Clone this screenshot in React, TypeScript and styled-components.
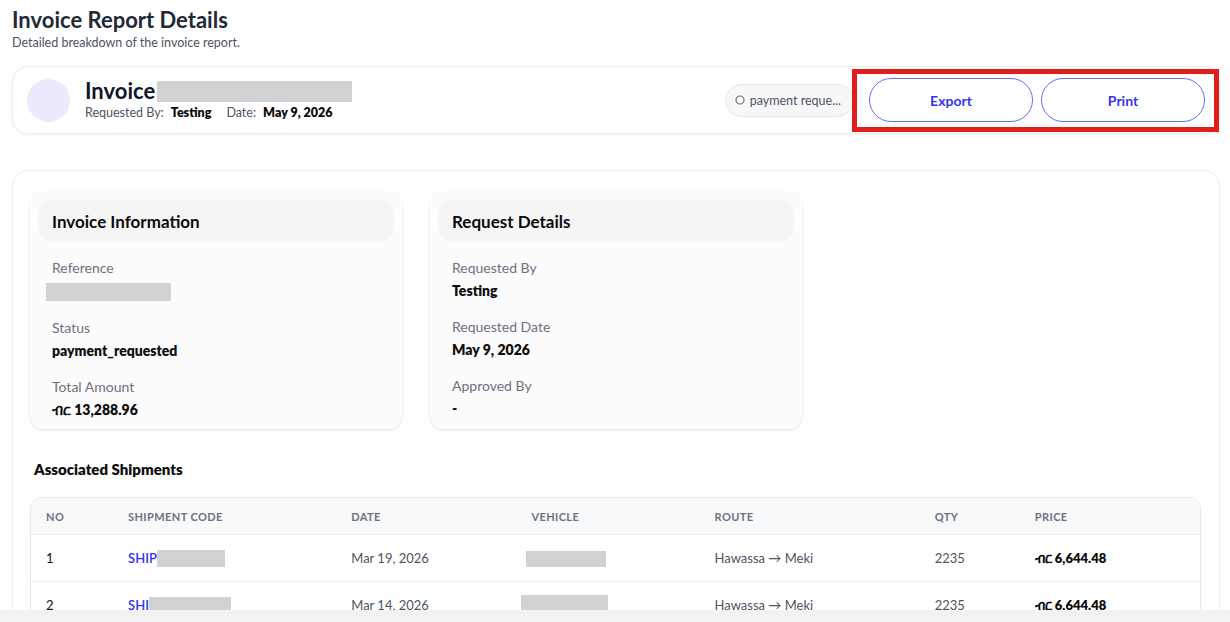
import styled, { createGlobalStyle } from "styled-components";

const GlobalStyle = createGlobalStyle`
  html, body {
    margin: 0;
    padding: 0;
    background: #ffffff;
    font-family: "Lato", "Noto Sans", "DejaVu Sans", sans-serif;
    color: #111827;
  }
  * {
    box-sizing: border-box;
  }
`;

const Page = styled.div`
  padding: 6px 10px 40px 12px;
`;

const PageTitle = styled.h1`
  margin: 0;
  font-size: 22px;
  line-height: 27px;
  font-weight: 700;
  color: #1f2937;
`;

const PageSubtitle = styled.p`
  margin: 2px 0 0;
  font-size: 12.5px;
  line-height: 16px;
  color: #4b5563;
`;

const HeaderCard = styled.div`
  margin-top: 15px;
  height: 68px;
  border: 1px solid #ececec;
  border-radius: 16px;
  box-shadow: 0 1px 3px rgba(0, 0, 0, 0.06);
  display: flex;
  align-items: center;
  padding: 0 14px 0 14px;
`;

const Avatar = styled.div`
  width: 43px;
  height: 43px;
  border-radius: 50%;
  background: #ebebfd;
  flex-shrink: 0;
`;

const HeaderText = styled.div`
  margin-left: 15px;
  display: flex;
  flex-direction: column;
  gap: 2px;
`;

const InvoiceTitle = styled.div`
  display: flex;
  align-items: center;
  gap: 2px;
  font-size: 22px;
  line-height: 24px;
  font-weight: 700;
  color: #0f172a;
`;

const Redacted = styled.span<{ $w: number; $h: number }>`
  display: inline-block;
  width: ${(p) => p.$w}px;
  height: ${(p) => p.$h}px;
  background: #d1d2d4;
  vertical-align: middle;
`;

const MetaLine = styled.div`
  display: flex;
  align-items: center;
  font-size: 12.5px;
  line-height: 16px;
  color: #4b5563;
`;

const MetaValue = styled.span`
  font-weight: 800;
  color: #0b0b0b;
  margin-left: 7px;
  margin-right: 15px;
`;

const Spacer = styled.div`
  flex: 1;
`;

const StatusPill = styled.div`
  height: 33px;
  padding: 0 12px 0 9px;
  border: 1px solid #e5e7eb;
  background: #f7f7f8;
  border-radius: 17px;
  display: flex;
  align-items: center;
  gap: 5px;
  font-size: 12.5px;
  color: #4b5563;
`;

const Highlight = styled.div`
  margin-left: -2px;
  margin-right: -14px;
  height: 63px;
  border: 5px solid #e31c1c;
  display: flex;
  align-items: center;
  gap: 8px;
  padding: 0 9px 0 12px;
`;

const ActionButton = styled.button`
  width: 164px;
  height: 44px;
  border-radius: 22px;
  border: 1px solid #6a6af5;
  background: #ffffff;
  color: #3434f0;
  font-family: inherit;
  font-size: 14px;
  font-weight: 700;
  cursor: pointer;
`;

const MainCard = styled.div`
  margin-top: 36px;
  border: 1px solid #efefef;
  border-radius: 16px;
  padding: 21px 18px 0 17px;
  min-height: 480px;
`;

const InfoGrid = styled.div`
  display: grid;
  grid-template-columns: 372px 372px;
  gap: 28px;
`;

const InfoCard = styled.div`
  background: #fcfcfc;
  border-radius: 14px;
  box-shadow: 0 1px 3px rgba(0, 0, 0, 0.12);
  padding: 8px 8px 18px;
  height: 237px;
`;

const InfoHeader = styled.div`
  background: #f5f5f6;
  border-radius: 14px;
  height: 42px;
  display: flex;
  align-items: center;
  padding-left: 14px;
  font-size: 17px;
  font-weight: 700;
  color: #0b0b0b;
`;

const FieldList = styled.div`
  padding: 17px 0 0 14px;
  display: flex;
  flex-direction: column;
  gap: 18px;
`;

const Field = styled.div`
  display: flex;
  flex-direction: column;
  gap: 5px;
`;

const FieldLabel = styled.div`
  font-size: 14px;
  line-height: 18px;
  color: #6b7280;
`;

const FieldValue = styled.div<{ $shift?: number }>`
  font-size: 14px;
  line-height: 18px;
  font-weight: 800;
  color: #0f0f0f;
  margin-left: ${(p) => p.$shift ?? 0}px;
`;

const SectionTitle = styled.h2`
  margin: 30px 0 18px 4px;
  font-size: 15px;
  line-height: 20px;
  font-weight: 800;
  color: #0f0f0f;
`;

const Table = styled.table`
  width: 100%;
  border-collapse: separate;
  border-spacing: 0;
  border: 1px solid #e7e8ea;
  border-radius: 12px;
  overflow: hidden;
  table-layout: fixed;
`;

const Th = styled.th<{ $w: number }>`
  width: ${(p) => p.$w}px;
  text-align: left;
  height: 37px;
  padding: 0 0 0 15px;
  background: #f8f9fa;
  font-size: 11px;
  font-weight: 700;
  letter-spacing: 0.4px;
  color: #6b7280;
  border-bottom: 1px solid #eceef0;
`;

const Td = styled.td<{ $strong?: boolean }>`
  height: 47px;
  padding: 0 0 0 15px;
  font-size: 13px;
  color: ${(p) => (p.$strong ? "#111111" : "#4b5563")};
  border-bottom: 1px solid #eceef0;
  white-space: nowrap;
`;

const CodeLink = styled.span`
  color: #3535ee;
  font-weight: 600;
  display: inline-flex;
  align-items: center;
`;

const Price = styled.span`
  font-weight: 800;
  color: #0b0b0b;
`;

const BottomBar = styled.div`
  position: fixed;
  left: 0;
  right: 0;
  bottom: 0;
  height: 12px;
  background: #f2f2f2;
`;

const columns = [
  { label: "NO", w: 82 },
  { label: "SHIPMENT CODE", w: 223 },
  { label: "DATE", w: 180 },
  { label: "VEHICLE", w: 183 },
  { label: "ROUTE", w: 220 },
  { label: "QTY", w: 100 },
  { label: "PRICE", w: 180 },
];

const shipments = [
  { no: 1, prefix: "SHIP", codeW: 68, date: "Mar 19, 2026", vehW: 80, vehShift: -5, vehH: 16 },
  { no: 2, prefix: "SHI", codeW: 82, date: "Mar 14, 2026", vehW: 87, vehShift: -10, vehH: 20 },
];

export default function App() {
  return (
    <Page>
      <GlobalStyle />
      <PageTitle>Invoice Report Details</PageTitle>
      <PageSubtitle>Detailed breakdown of the invoice report.</PageSubtitle>

      <HeaderCard>
        <Avatar />
        <HeaderText>
          <InvoiceTitle>
            Invoice <Redacted $w={195} $h={21} />
          </InvoiceTitle>
          <MetaLine>
            Requested By: <MetaValue>Testing</MetaValue>
            Date: <MetaValue>May 9, 2026</MetaValue>
          </MetaLine>
        </HeaderText>
        <Spacer />
        <StatusPill>
          <svg width="10" height="10" viewBox="0 0 10 10">
            <circle cx="5" cy="5" r="4" fill="none" stroke="#6b7280" strokeWidth="1.2" />
          </svg>
          payment reque...
        </StatusPill>
        <Highlight>
          <ActionButton>Export</ActionButton>
          <ActionButton>Print</ActionButton>
        </Highlight>
      </HeaderCard>

      <MainCard>
        <InfoGrid>
          <InfoCard>
            <InfoHeader>Invoice Information</InfoHeader>
            <FieldList>
              <Field>
                <FieldLabel>Reference</FieldLabel>
                <FieldValue $shift={-6}>
                  <Redacted $w={125} $h={18} />
                </FieldValue>
              </Field>
              <Field>
                <FieldLabel>Status</FieldLabel>
                <FieldValue>payment_requested</FieldValue>
              </Field>
              <Field>
                <FieldLabel>Total Amount</FieldLabel>
                <FieldValue>ብር 13,288.96</FieldValue>
              </Field>
            </FieldList>
          </InfoCard>
          <InfoCard>
            <InfoHeader>Request Details</InfoHeader>
            <FieldList>
              <Field>
                <FieldLabel>Requested By</FieldLabel>
                <FieldValue>Testing</FieldValue>
              </Field>
              <Field>
                <FieldLabel>Requested Date</FieldLabel>
                <FieldValue>May 9, 2026</FieldValue>
              </Field>
              <Field>
                <FieldLabel>Approved By</FieldLabel>
                <FieldValue>-</FieldValue>
              </Field>
            </FieldList>
          </InfoCard>
        </InfoGrid>

        <SectionTitle>Associated Shipments</SectionTitle>
        <Table>
          <thead>
            <tr>
              {columns.map((c) => (
                <Th key={c.label} $w={c.w}>
                  {c.label}
                </Th>
              ))}
            </tr>
          </thead>
          <tbody>
            {shipments.map((s) => (
              <tr key={s.no}>
                <Td $strong>{s.no}</Td>
                <Td>
                  <CodeLink>
                    {s.prefix}
                    <Redacted $w={s.codeW} $h={17} />
                  </CodeLink>
                </Td>
                <Td>{s.date}</Td>
                <Td>
                  <Redacted $w={s.vehW} $h={s.vehH} style={{ marginLeft: s.vehShift }} />
                </Td>
                <Td>Hawassa → Meki</Td>
                <Td>2235</Td>
                <Td>
                  <Price>ብር 6,644.48</Price>
                </Td>
              </tr>
            ))}
          </tbody>
        </Table>
      </MainCard>
      <BottomBar />
    </Page>
  );
}
